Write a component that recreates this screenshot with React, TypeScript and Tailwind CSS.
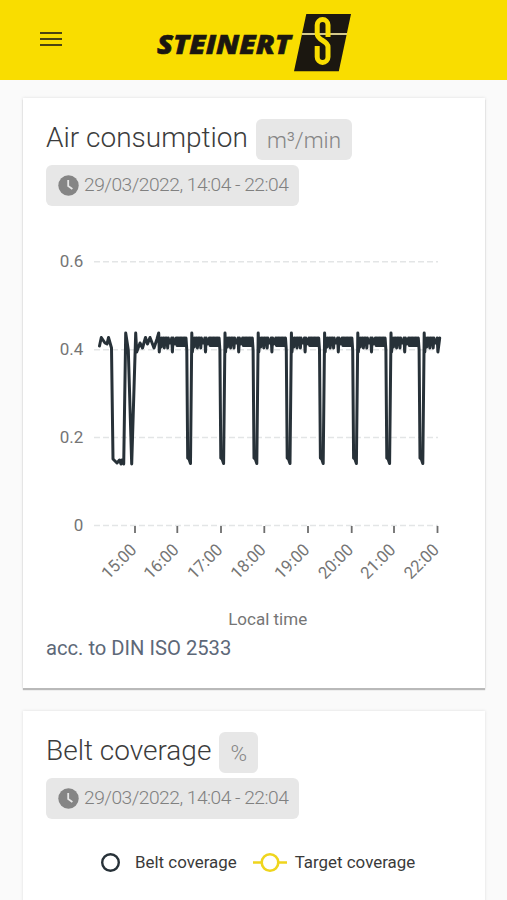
import React from 'react';

const HOURS = ['15:00', '16:00', '17:00', '18:00', '19:00', '20:00', '21:00', '22:00'];
const TICKS = [135, 177.3, 221, 264.3, 308, 351.7, 394, 437.5];
const LEVELS = [
  { label: '0.6', y: 261.7 },
  { label: '0.4', y: 349.7 },
  { label: '0.2', y: 437.5 },
  { label: '0', y: 525.5 },
];

// warm-up phase, before the compressor starts to cycle regularly
const START = [
  [99.5, 346], [101.3, 337.5], [105, 343], [107, 344], [108.5, 337.5], [111.5, 348], [113, 459], [117, 463],
  [119.5, 460], [121, 464], [122, 460], [123.7, 464], [125.7, 333], [128.3, 350], [131.7, 464], [135.7, 333],
  [136.7, 352], [140, 343], [142.5, 348], [145.5, 337.5], [147.5, 344], [150, 337.5], [154, 348], [157, 339],
];

// one cycle, as offset from the peak
const CYCLE = [
  [0, 333], [0.6, 352], [1.4, 338], [2.4, 347], [3.2, 338], [4, 345], [4.8, 338], [5.6, 348], [6.4, 338], [7.2, 344],
  [8, 338], [9, 348], [9.6, 338], [10.4, 343], [12, 343], [13, 338], [13.7, 352], [14.4, 338], [15.4, 344], [17, 343],
  [17.6, 338], [18.2, 345.5], [18.9, 338], [19.6, 345.5], [20.3, 338], [21, 345.5], [21.7, 338], [22.4, 345.5],
  [23.1, 338], [23.8, 345.5], [24.5, 338], [25.2, 345.5], [25.9, 338], [26.6, 345.5], [27.3, 338],
];
const DROP = [[28.1, 350], [29, 458], [30.3, 459], [31.8, 463.5]];

const PEAKS = [158.7, 191.8, 225, 258.2, 291.4, 324.6, 357.8, 391, 424.2];

const points = [
  ...START,
  ...PEAKS.flatMap((peak, i) => {
    const last = i === PEAKS.length - 1;
    const cycle = last ? CYCLE.filter(([x]) => x < 14) : [...CYCLE, ...DROP];
    return cycle.map(([x, y]) => [peak + x, y]);
  }),
  [439.7, 338],
]
  .map(([x, y]) => `${x.toFixed(1)},${y}`)
  .join(' ');

const Logo: React.FC = () => (
  <svg className="block" width="196" height="60" viewBox="156 13 196 60">
    <text
      x="157"
      y="53.5"
      fontFamily="'Open Sans', sans-serif"
      fontSize="26"
      fontWeight="800"
      fontStyle="italic"
      textLength="134"
      lengthAdjust="spacingAndGlyphs"
      fill="#1b1710"
      stroke="#1b1710"
      strokeWidth="0.6"
    >
      STEINERT
    </text>
    <path d="M306.3 14H351L338.8 71.3H294Z" fill="#1b1710" />
    <path d="M302 34H347" stroke="#d5c98a" strokeWidth="1.8" />
    <path
      d="M328 37V25a5.4 5.4 0 0 0-10.8 0V34c0 6.5 10.8 6.5 10.8 13V57a5.4 5.4 0 0 1-10.8 0V46"
      fill="none"
      stroke="#f9dd00"
      strokeWidth="5"
    />
  </svg>
);

interface HeadingProps {
  title: string;
  unit: string;
}

const Heading: React.FC<HeadingProps> = ({ title, unit }) => (
  <div className="flex flex-col items-start gap-[5px] pt-[21px]">
    <div className="flex h-[41px] items-center gap-2">
      <h2 className="pb-[3px] text-[28px] leading-[36px] font-light whitespace-nowrap text-[#3c3c3c]">{title}</h2>
      <span className="flex h-[41px] items-center rounded-md bg-[#e7e7e7] px-[11px] pt-[2px] text-[22.4px] font-light text-[#858585]">
        {unit}
      </span>
    </div>
    <div className="flex h-[41px] w-[253px] items-center gap-[5px] rounded-md bg-[#e7e7e7] pl-[12px] text-[19.2px] font-light tracking-[-0.5px] whitespace-nowrap text-[#808080]">
      <svg className="shrink-0" width="21" height="21" viewBox="0 0 21 21">
        <circle cx="10.5" cy="10.5" r="10.2" fill="#858585" />
        <path d="M10.2 5v6l4.2 3" fill="none" stroke="#e7e7e7" strokeWidth="1.8" />
      </svg>
      29/03/2022, 14:04 - 22:04
    </div>
  </div>
);

const AirChart: React.FC = () => (
  <svg className="-ml-[23px] block" width="462" height="426" viewBox="23 206 462 426" fontFamily="Roboto, sans-serif" fontSize="17" fill="#757575">
    {LEVELS.map(({ label, y }) => (
      <g key={label}>
        <text x="83.3" y={y + 5.5} textAnchor="end">{label}</text>
        <path d={`M94 ${y}H438`} stroke="#e3e5e6" strokeWidth="1.6" strokeDasharray="6 3" />
      </g>
    ))}
    {HOURS.map((hour, i) => (
      <g key={hour}>
        <path d={`M${TICKS[i]} 526V533`} stroke="#6e6e6e" strokeWidth="1.8" />
        <text transform={`translate(${TICKS[i] + 2.5} 551) rotate(-45)`} textAnchor="end" textLength="41" lengthAdjust="spacingAndGlyphs">
          {hour}
        </text>
      </g>
    ))}
    <polyline points={points} fill="none" stroke="#273138" strokeWidth="3" strokeLinejoin="round" strokeLinecap="round" />
    <text x="267.7" y="625" textAnchor="middle">Local time</text>
  </svg>
);

const App: React.FC = () => {
  return (
    <div className="h-[900px] w-[507px] overflow-hidden bg-[#fafafa] font-['Roboto',sans-serif]">
      <header className="flex h-20 items-start bg-[#f9dd00] pt-[13px] pl-10">
        <button className="mt-[19px] mr-[94px] flex w-[22px] flex-col gap-1" aria-label="Menu">
          <span className="h-[2px] w-full bg-[#4c4411]" />
          <span className="h-[2px] w-full bg-[#4c4411]" />
          <span className="h-[2px] w-full bg-[#4c4411]" />
        </button>
        <Logo />
      </header>

      <main className="flex flex-col gap-[23px] pt-[18px] pr-[22px] pl-[23px]">
        <section className="h-[590px] bg-white px-[23px] shadow-[0_2px_1px_#b9b9b9,0_0_3px_#dedede]">
          <Heading title="Air consumption" unit="m³/min" />
          <AirChart />
          <p className="mt-[2px] text-[20.2px] leading-7 text-[#5d6878]">acc. to DIN ISO 2533</p>
        </section>

        <section className="h-[400px] bg-white px-[23px] shadow-[0_0_3px_#dedede]">
          <Heading title="Belt coverage" unit="%" />
          <div className="flex items-center pt-[31px] pl-[54px] text-[16.9px] leading-6 whitespace-nowrap text-[#3a3a3a]">
            <svg className="mr-[14px]" width="21" height="21" viewBox="0 0 21 21">
              <circle cx="10.5" cy="10.5" r="8.3" fill="none" stroke="#273138" strokeWidth="2.4" />
            </svg>
            <span>Belt coverage</span>
            <svg className="mr-[7px] ml-[15px]" width="36" height="21" viewBox="0 0 36 21">
              <path d="M1 10.5H35" stroke="#efd51d" strokeWidth="2.6" />
              <circle cx="18" cy="10.5" r="8.3" fill="#fff" stroke="#efd51d" strokeWidth="2.6" />
            </svg>
            <span>Target coverage</span>
          </div>
        </section>
      </main>
    </div>
  );
};

export default App;
